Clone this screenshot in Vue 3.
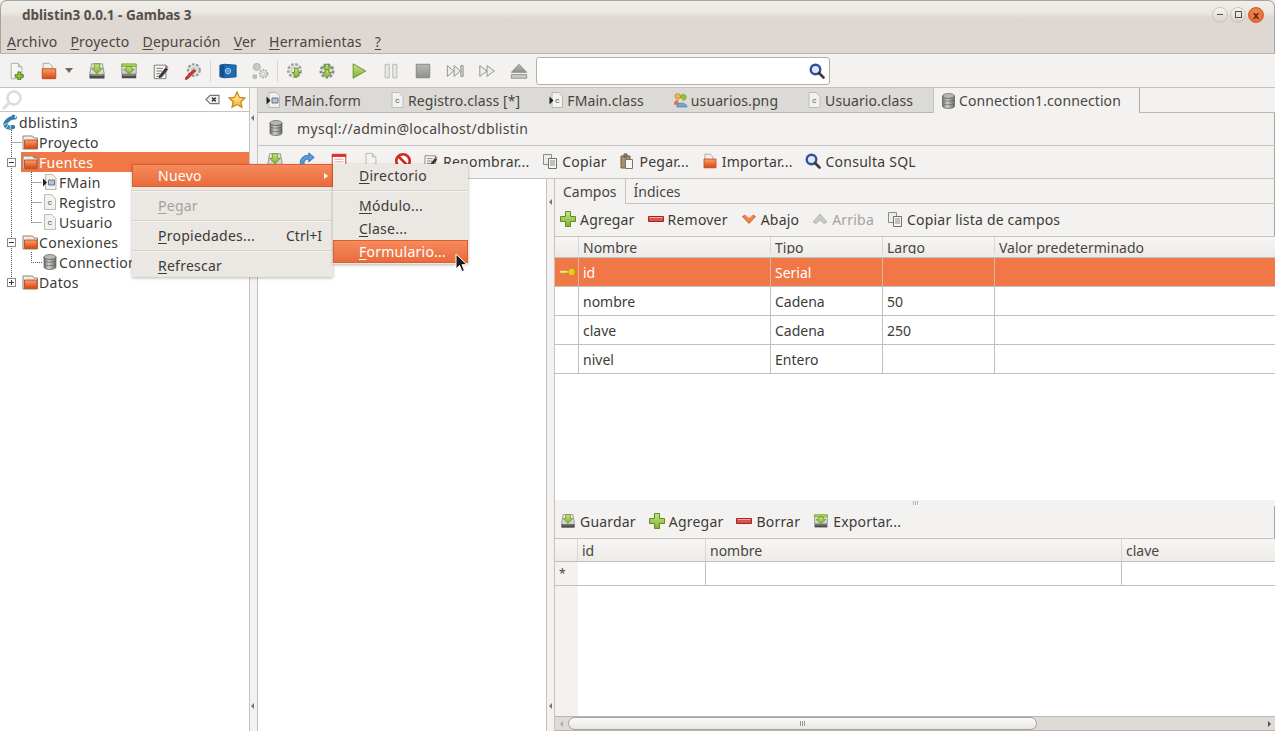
<script setup>
const mainTools = [
  { i: 'newdoc' }, { i: 'folder', cls: 'wide' }, { i: 'save' }, { i: 'export' }, { i: 'edit' }, { i: 'tools' },
  { sep: true }, { i: 'book' }, { i: 'gears' }, { sep: true },
  { i: 'gearsave' }, { i: 'gearsave2' }, { i: 'play' }, { i: 'pause' }, { i: 'stop' }, { i: 'next' }, { i: 'ffwd' }, { i: 'eject' }
]
const tabs = [
  { i: 'form', t: 'FMain.form' }, { i: 'cls', t: 'Registro.class [*]' }, { i: 'formcls', t: 'FMain.class' },
  { i: 'users', t: 'usuarios.png' }, { i: 'cls', t: 'Usuario.class' }, { i: 'db', t: 'Connection1.connection', active: true }
]
const connTools = [
  { i: 'save' }, { i: 'refresh' }, { i: 'calendar' }, { i: 'docimport' }, { i: 'nosign' }
]
const connText = [
  { i: 'edit', t: 'Renombrar...' }, { i: 'copy', t: 'Copiar' }, { i: 'paste', t: 'Pegar...' },
  { i: 'folder', t: 'Importar...' }, { i: 'search', t: 'Consulta SQL' }
]
const fieldTools = [
  { i: 'plus', t: 'Agregar' }, { i: 'minus', t: 'Remover' }, { i: 'down', t: 'Abajo' },
  { i: 'up', t: 'Arriba', off: true }, { i: 'copy', t: 'Copiar lista de campos' }
]
const dataTools = [
  { i: 'save', t: 'Guardar' }, { i: 'plus', t: 'Agregar' }, { i: 'minus', t: 'Borrar' }, { i: 'export', t: 'Exportar...' }
]
const tree = [
  { l: 0, i: 'gambas', t: 'dblistin3' }, { l: 1, i: 'tfolder', t: 'Proyecto' },
  { l: 1, i: 'tfolder', t: 'Fuentes', sel: true }, { l: 2, i: 'form', t: 'FMain' },
  { l: 2, i: 'cls', t: 'Registro' }, { l: 2, i: 'cls', t: 'Usuario' },
  { l: 1, i: 'tfolder', t: 'Conexiones' }, { l: 2, i: 'db', t: 'Connection1' }, { l: 1, i: 'tfolder', t: 'Datos' }
]
const fields = [
  { n: 'id', t: 'Serial', l: '', key: true }, { n: 'nombre', t: 'Cadena', l: '50' },
  { n: 'clave', t: 'Cadena', l: '250' }, { n: 'nivel', t: 'Entero', l: '' }
]
</script>

<template>
  <div class="win">
    <svg class="sprite" width="0" height="0" aria-hidden="true">
      <defs>
        <linearGradient id="gO" x1="0" y1="0" x2="0" y2="1"><stop offset="0" stop-color="#f8a070"/><stop offset="1" stop-color="#d8450f"/></linearGradient>
        <linearGradient id="gG" x1="0" y1="0" x2="0" y2="1"><stop offset="0" stop-color="#c9e28c"/><stop offset="1" stop-color="#7fb02e"/></linearGradient>
        <linearGradient id="gD" x1="0" y1="0" x2="0" y2="1"><stop offset="0" stop-color="#f2f2f0"/><stop offset="1" stop-color="#c4c4c0"/></linearGradient>
        <linearGradient id="gC" x1="0" y1="0" x2="1" y2="0"><stop offset="0" stop-color="#6f6f6b"/><stop offset=".4" stop-color="#cfcfca"/><stop offset="1" stop-color="#6a6a66"/></linearGradient>
        <linearGradient id="gS2" x1="0" y1="0" x2="0" y2="1"><stop offset="0" stop-color="#b8b8b5"/><stop offset="1" stop-color="#8f8f8c"/></linearGradient>
        <radialGradient id="gS" cx=".5" cy=".4" r=".6"><stop offset="0" stop-color="#ffe486"/><stop offset="1" stop-color="#f2a527"/></radialGradient>
      </defs>
      <symbol id="newdoc" viewBox="0 0 20 20"><path d="M3.500 1.500h8l4 4v13h-12z" fill="#f6f6f4" stroke="#a9a9a5"/><path d="M11.500 1.500v4h4" fill="#dcdcd8" stroke="#a9a9a5"/><path d="M11 11h3v3h3v3h-3v3h-3v-3H8v-3h3z" fill="#8fc43a" stroke="#4f7d14"/></symbol>
      <symbol id="folder" viewBox="0 0 20 20"><path d="M3.500 1.500h7l3 3v5h-10z" fill="#f3f1ee" stroke="#a59f98"/><path d="M2.500 7.500h15v11h-15z" fill="url(#gO)" stroke="#b9491c"/></symbol>
      <symbol id="tfolder" viewBox="0 0 16 16"><path d="M1 2h9.500l1.500 2h3.500v11H1z" fill="#f0ede8" stroke="#8c857c"/><path d="M2.500 6h12.500v8.500H2.500z" fill="url(#gO)" stroke="#c2551f"/></symbol>
      <symbol id="save" viewBox="0 0 20 20"><path d="M4 2h12l2 11v5H2v-5z" fill="url(#gD)" stroke="#8e8e8a"/><path d="M2 14h16v4H2z" fill="#4b4b48"/><path d="M3 15h14" stroke="#8c8c88"/><path d="M7 2h6v5h3l-6 6-6-6h3z" fill="url(#gG)" stroke="#6a9a20"/></symbol>
      <symbol id="export" viewBox="0 0 20 20"><path d="M2 3h16v10.500H2z" fill="url(#gD)" stroke="#8e8e8a"/><path d="M2 2h16v3H2z" fill="#a8d254" stroke="#6a9a20" stroke-width=".7"/><path d="M2 14h16v4H2z" fill="#4b4b48"/><path d="M3 15h14" stroke="#8c8c88"/><path d="M7 5h6v3h3l-6 5-6-5h3z" fill="url(#gG)" stroke="#6a9a20"/></symbol>
      <symbol id="edit" viewBox="0 0 20 20"><path d="M2.500 3.500h13v15h-13z" fill="#f7f7f5" stroke="#77736e"/><path d="M5 7h7M5 10h6M5 13h4M5 16h5" stroke="#6b6b68"/><path d="M8 15l7-9 3 2-7 9-3.500 1z" fill="#3c3c3a"/><path d="M15.500 3.500l3 2-1 1.500-3-2z" fill="#c85fa3"/></symbol>
      <symbol id="tools" viewBox="0 0 20 20"><circle cx="11" cy="9" r="6.500" fill="#e4e4e1" stroke="#9b9b97" stroke-width="2.400" stroke-dasharray="3 1.600"/><circle cx="11" cy="9" r="2.500" fill="#f4f4f2" stroke="#9b9b97"/><path d="M2 17l9-9 2 2-9 9-2.500.5z" fill="#d6332b" stroke="#9a1c14" stroke-width=".7"/></symbol>
      <symbol id="book" viewBox="0 0 20 20"><path d="M1 3.500l5-1 13 1v13l-13 1-5-1z" fill="#1c6fb4" stroke="#0d4b82"/><path d="M1 4l5-1v14l-5-1z" fill="#0f538f"/><circle cx="10" cy="10" r="3" fill="none" stroke="#bcd7ee"/><path d="M10 7.500v5M7.800 10h4.400" stroke="#bcd7ee" stroke-width=".7"/></symbol>
      <symbol id="gears" viewBox="0 0 20 20"><circle cx="6.500" cy="5.500" r="4" fill="#c9c9c6" stroke="#b2b2af"/><circle cx="14" cy="13" r="4.200" fill="#efefed" stroke="#a9a9a6" stroke-width="2" stroke-dasharray="2 1"/><circle cx="14" cy="13" r="1.800" fill="#fff" stroke="#b0b0ad"/><path d="M2.500 14.500h3.500v3.500H2.500z" fill="#c6c6c3" stroke="#a8a8a5"/></symbol>
      <symbol id="gearsave" viewBox="0 0 20 20"><circle cx="9.500" cy="9.500" r="7" fill="#e8e8e5" stroke="#a3a3a0" stroke-width="2.800" stroke-dasharray="3 1.700"/><circle cx="9.500" cy="9.500" r="3.500" fill="#f2f2f0" stroke="#aaa"/><path d="M9.500 7h4v4.500h2.500l-4.500 6-4.500-6h2.500z" fill="url(#gG)" stroke="#5f9018"/></symbol>
      <symbol id="gearsave2" viewBox="0 0 20 20"><circle cx="10" cy="10" r="7" fill="#dcdcd9" stroke="#8f8f8c" stroke-width="2.800" stroke-dasharray="3 1.700"/><path d="M8 2.500h4v3h3l-5 5-5-5h3z" fill="url(#gG)" stroke="#5f9018"/><path d="M8 8.500h4v3h3l-5 6-5-6h3z" fill="url(#gG)" stroke="#5f9018"/></symbol>
      <symbol id="play" viewBox="0 0 20 20"><path d="M3.500 2v16l14-8z" fill="url(#gG)" stroke="#62921b"/></symbol>
      <symbol id="pause" viewBox="0 0 20 20"><path d="M3.500 2.500h4.500v15H3.500zM12 2.500h4.500v15H12z" fill="#e7e7e4" stroke="#b2b2af"/></symbol>
      <symbol id="stop" viewBox="0 0 20 20"><path d="M2.500 2.500h15v15h-15z" fill="url(#gS2)" stroke="#858582"/></symbol>
      <symbol id="next" viewBox="0 0 20 20"><path d="M1.500 4v12l7-6zM9 4v12l7-6z" fill="#ececea" stroke="#8c8c89"/><path d="M16.500 4h2.500v12h-2.500z" fill="#d6d6d3" stroke="#8c8c89"/></symbol>
      <symbol id="ffwd" viewBox="0 0 20 20"><path d="M2 4v12l8-6zM10 4v12l8-6z" fill="#ececea" stroke="#8c8c89"/></symbol>
      <symbol id="eject" viewBox="0 0 20 20"><path d="M10 2.500l8.500 9H1.500z" fill="url(#gS2)" stroke="#8b8b88"/><path d="M1.500 14h17v4h-17z" fill="#c9c9c6" stroke="#8b8b88"/></symbol>
      <symbol id="search" viewBox="0 0 16 16"><circle cx="6.500" cy="6.500" r="4.800" fill="#dfe9f5" stroke="#2f4f9f" stroke-width="2.400"/><path d="M10 10l4.500 4.500" stroke="#3b3b3b" stroke-width="2.600" stroke-linecap="round"/></symbol>
      <symbol id="ghost" viewBox="0 0 20 20"><circle cx="12" cy="8" r="6.500" fill="#fff" stroke="#dcdcda" stroke-width="2.500"/><path d="M7 13l-5 5" stroke="#dcdcda" stroke-width="3" stroke-linecap="round"/></symbol>
      <symbol id="clear" viewBox="0 0 16 14"><path d="M1 7l4.500-4.500h9.500v9H5.500z" fill="#f2f2f0" stroke="#77776f" stroke-width="1.200"/><path d="M7.500 5l4 4M11.500 5l-4 4" stroke="#3f3f3d" stroke-width="1.600"/></symbol>
      <symbol id="star" viewBox="0 0 16 16"><path d="M8 .8l2.200 4.700 5 .6-3.700 3.500 1 5-4.500-2.500-4.500 2.500 1-5L.8 6.100l5-.6z" fill="url(#gS)" stroke="#c98414"/></symbol>
      <symbol id="gambas" viewBox="0 0 16 16"><path d="M13 3.500C9 3.500 5 6 3.500 9.500 3 12.500 6 14.500 11 13" fill="none" stroke="#2f7fa8" stroke-width="4.200" stroke-linecap="round"/><path d="M2 11l3.500-2M4 14l2.500-3.500M8 15l.5-3.500" stroke="#cfe4ee" stroke-width="1"/><circle cx="13.500" cy="3" r=".9" fill="#fff"/><path d="M10 1l3 1" stroke="#1f5f84"/></symbol>
      <symbol id="form" viewBox="0 0 14 16"><path d="M2.500 .5h7l3.500 3.500v11.500h-10.500z" fill="#f1f1ef" stroke="#b7b7b3"/><path d="M5.500 6h6v5h-6z" fill="#b5c3d4" stroke="#687788"/><path d="M0 4.500l4 4-4 4z" fill="#222"/></symbol>
      <symbol id="cls" viewBox="0 0 14 16"><path d="M1.500 .5h7l4 4v11h-11z" fill="#f1f1ef" stroke="#bcbcb8"/><text x="4.500" y="11" font-size="8" font-family="Liberation Mono" fill="#555">c</text></symbol>
      <symbol id="formcls" viewBox="0 0 14 16"><path d="M2.500 .5h7l3.500 3.500v11.500h-10.500z" fill="#f1f1ef" stroke="#b7b7b3"/><path d="M0 4.500l4 4-4 4z" fill="#222"/><text x="5.500" y="11" font-size="8" font-family="Liberation Mono" fill="#555">c</text></symbol>
      <symbol id="users" viewBox="0 0 16 16"><circle cx="5" cy="4" r="3" fill="#f0b24a" stroke="#b87d1e" stroke-width=".6"/><circle cx="11" cy="5" r="3" fill="#8fc43a" stroke="#5c8a18" stroke-width=".6"/><path d="M1 13c0-4 2-5 4-5s4 1 4 5z" fill="#df6d55"/><circle cx="8" cy="9" r="2.800" fill="#f5d7b8" stroke="#bd9161" stroke-width=".6"/><path d="M4 15.500c0-3 2-4 4-4s7 0 7 4z" fill="#6ea7dc" stroke="#3e76ad" stroke-width=".6"/></symbol>
      <symbol id="db" viewBox="0 0 14 16"><ellipse cx="7" cy="3" rx="6" ry="2.500" fill="#b8b8b3" stroke="#5f5f5b" stroke-width=".7"/><path d="M1 3v10c0 1.500 2.500 2.500 6 2.500s6-1 6-2.500V3c0 1.500-2.500 2.500-6 2.500S1 4.500 1 3z" fill="url(#gC)" stroke="#5f5f5b" stroke-width=".7"/><path d="M1 7c1 1.500 11 1.500 12 0M1 10.500c1 1.500 11 1.500 12 0" stroke="#5a5a56" stroke-width=".6" fill="none"/></symbol>
      <symbol id="refresh" viewBox="0 0 20 20"><path d="M3 15c-2-7 3-12 9-11V1l6 5-6 5V8C8 7.500 6 10 7 15z" fill="#5a9bdc" stroke="#2f6cab"/></symbol>
      <symbol id="calendar" viewBox="0 0 20 20"><path d="M2.500 3.500h15v14h-15z" fill="#fff" stroke="#c92a1f"/><path d="M2 2h16v3.500H2z" fill="#d9352a"/><path d="M5 8h10M5 11h10M5 14h10" stroke="#e99690"/></symbol>
      <symbol id="docimport" viewBox="0 0 20 20"><path d="M4.500 1.500h7l4 4v13h-11z" fill="#f4f4f2" stroke="#b3b3af"/><path d="M11.500 1.500v4h4" fill="#ddd" stroke="#b3b3af"/><path d="M14 13v5" stroke="#8fc43a" stroke-width="2"/></symbol>
      <symbol id="nosign" viewBox="0 0 20 20"><circle cx="10" cy="10" r="7.500" fill="#fff" stroke="#cf2b20" stroke-width="3"/><path d="M5 5l10 10" stroke="#cf2b20" stroke-width="3"/></symbol>
      <symbol id="copy" viewBox="0 0 16 16"><path d="M1.500 1.500h8v10h-8z" fill="#ececea" stroke="#8b8b88"/><path d="M6.500 5.500h8v10h-8z" fill="#f6f6f4" stroke="#6f6f6c"/><path d="M8 8h5M8 10h5M8 12h5" stroke="#8b8b88"/></symbol>
      <symbol id="paste" viewBox="0 0 16 16"><path d="M2 3h9v12H2z" fill="#a88f6b" stroke="#6f5c40"/><path d="M5 1h3v3H5z" fill="#8c8c88" stroke="#555"/><path d="M6.500 6.500h7v9h-7z" fill="#f6f6f4" stroke="#77736e"/></symbol>
      <symbol id="plus" viewBox="0 0 16 16"><path d="M5.500 .5h5v5h5v5h-5v5h-5v-5h-5v-5h5z" fill="url(#gG)" stroke="#5f8d18"/></symbol>
      <symbol id="minus" viewBox="0 0 16 16"><path d="M.5 5.500h15v5H.5z" fill="#d9534a" stroke="#a1271e"/><path d="M1.500 6.500h13" stroke="#f0a59f"/></symbol>
      <symbol id="down" viewBox="0 0 16 16"><path d="M1.500 5.500l2.500-1.500 4 3.500 4-3.500 2.500 1.500-6.500 7z" fill="#ee8345" stroke="#c2531c" stroke-width=".8"/><path d="M4 4l4 3.500L12 4" fill="none" stroke="#f8c29e" stroke-width=".7"/></symbol>
      <symbol id="up" viewBox="0 0 16 16"><path d="M1 11l3 1.500L8 9l4 3.500 3-1.500-7-8z" fill="#c9c9c6" stroke="#a9a9a6" stroke-width=".8"/></symbol>
      <symbol id="key" viewBox="0 0 18 10"><path d="M1 3.800h9v2.400H1z" fill="#f7e78a"/><circle cx="12.500" cy="5" r="3.700" fill="#eccb1c" stroke="#a98e0f" stroke-width=".7"/><path d="M1 6.200h9" stroke="#a98e0f" stroke-width=".7"/></symbol>
    </svg>

    <header class="title">
      <span class="title-text">dblistin3 0.0.1 - Gambas 3</span>
      <div class="win-btns">
        <span class="wb"><i class="dash"></i></span><span class="wb"><i class="sq"></i></span><span class="wb close">x</span>
      </div>
    </header>

    <nav class="menubar">
      <span><u>A</u>rchivo</span><span><u>P</u>royecto</span><span><u>D</u>epuración</span><span><u>V</u>er</span><span><u>H</u>erramientas</span><span><u>?</u></span>
    </nav>

    <div class="maintools">
      <template v-for="(b, k) in mainTools" :key="k">
        <i v-if="b.sep" class="vsep"></i>
        <span v-else class="tbtn" :class="b.cls">
          <svg class="ic18"><use :href="'#' + b.i" /></svg>
          <i v-if="b.cls" class="drop"></i>
        </span>
      </template>
      <div class="searchbox"><svg class="ic16"><use href="#search" /></svg></div>
    </div>

    <div class="body">
      <aside class="left">
        <div class="filter">
          <svg class="ic20 ghost"><use href="#ghost" /></svg>
          <svg class="clear"><use href="#clear" /></svg>
          <svg class="ic18 star"><use href="#star" /></svg>
        </div>
        <div class="tree">
          <svg class="guides" width="60" height="190">
            <g fill="none" stroke="#555" stroke-dasharray="1 1">
              <path d="M11.500 18V170M11.500 30.500H22M31.500 60V110.500M31.500 70.500H42M31.500 90.500H42M31.500 110.500H42M31.500 140V150.500H42"/>
            </g>
            <g fill="#fff" stroke="#8a8a86">
              <rect x="7.500" y="46.500" width="8" height="8"/><rect x="7.500" y="126.500" width="8" height="8"/><rect x="7.500" y="166.500" width="8" height="8"/>
            </g>
            <path d="M9 50.500h5M9 130.500h5M9 170.500h5M11.500 168v5" stroke="#333"/>
          </svg>
          <div v-for="r in tree" :key="r.t" class="node" :class="['lv' + r.l, { sel: r.sel }]">
            <svg class="ic16"><use :href="'#' + r.i" /></svg><span>{{ r.t }}</span>
          </div>
        </div>
      </aside>

      <div class="split"><i class="tri top"></i><i class="tri bot"></i></div>

      <main class="right">
        <div class="tabs">
          <div v-for="t in tabs" :key="t.t + t.i" class="tab" :class="{ active: t.active }">
            <svg class="ic15"><use :href="'#' + t.i" /></svg><span>{{ t.t }}</span>
          </div>
          <div class="tabfill"></div>
        </div>
        <div class="connhead">
          <svg class="ic16"><use href="#db" /></svg><span>mysql://admin@localhost/dblistin</span>
        </div>
        <div class="conntools">
          <span v-for="b in connTools" :key="b.i" class="tbtn small"><svg class="ic18"><use :href="'#' + b.i" /></svg></span>
          <span v-for="b in connText" :key="b.t" class="tt"><svg class="ic16"><use :href="'#' + b.i" /></svg>{{ b.t }}</span>
        </div>
        <div class="work">
          <div class="tables"></div>
          <div class="split2"><i class="tri top"></i><i class="tri bot"></i></div>
          <section class="detail">
            <div class="subtabs">
              <span class="st on">Campos</span><span class="st">Índices</span><i class="stfill"></i>
            </div>
            <div class="tb2">
              <span v-for="b in fieldTools" :key="b.t" class="tt" :class="{ off: b.off }"><svg class="ic16"><use :href="'#' + b.i" /></svg>{{ b.t }}</span>
            </div>
            <div class="grid1">
              <div class="grow head"><span></span><span>Nombre</span><span>Tipo</span><span>Largo</span><span>Valor predeterminado</span></div>
              <div v-for="f in fields" :key="f.n" class="grow" :class="{ cur: f.key }">
                <span class="rh"><svg v-if="f.key" class="key"><use href="#key" /></svg></span>
                <span>{{ f.n }}</span><span>{{ f.t }}</span><span>{{ f.l }}</span><span></span>
              </div>
            </div>
            <div class="hsplit"><i></i></div>
            <div class="tb2 tb3">
              <span v-for="b in dataTools" :key="b.t" class="tt"><svg class="ic16"><use :href="'#' + b.i" /></svg>{{ b.t }}</span>
            </div>
            <div class="grid2">
              <div class="drow head"><span></span><span>id</span><span>nombre</span><span>clave</span></div>
              <div class="drow"><span class="star-h">*</span><span></span><span></span><span></span></div>
              <div class="dfill"><span class="gutter"></span></div>
            </div>
            <div class="hscroll">
              <i class="arr l"></i><div class="thumb"><b></b></div><i class="arr r"></i>
            </div>
          </section>
        </div>
      </main>
    </div>

    <div class="menu m1">
      <div class="mi hot"><span class="lbl">Nuevo</span><i class="marrow"></i></div>
      <hr />
      <div class="mi dis"><span class="lbl"><u>P</u>egar</span></div>
      <hr />
      <div class="mi"><span class="lbl"><u>P</u>ropiedades...</span><em>Ctrl+I</em></div>
      <hr />
      <div class="mi"><span class="lbl"><u>R</u>efrescar</span></div>
    </div>
    <div class="menu m2">
      <div class="mi"><span class="lbl"><u>D</u>irectorio</span></div>
      <hr />
      <div class="mi"><span class="lbl"><u>M</u>ódulo...</span></div>
      <div class="mi tight"><span class="lbl"><u>C</u>lase...</span></div>
      <div class="mi tight hot"><span class="lbl"><u>F</u>ormulario...</span></div>
    </div>
    <svg class="cursor" width="14" height="20" viewBox="0 0 14 20"><path d="M1 1v15l3.500-3.500 2.500 6 2.500-1-2.500-5.800h5z" fill="#1c1c1c" stroke="#fff"/></svg>
  </div>
</template>

<style>
html, body { margin: 0; padding: 0; background: #f2f1f0; overflow: hidden; }
</style>

<style scoped>
.win {
  position: relative; width: 1275px; height: 731px; overflow: hidden; box-sizing: border-box;
  display: flex; flex-direction: column; background: #f4f2f0; color: #3c3b37;
  font-family: "Noto Sans", sans-serif; font-size: 14px; border-radius: 7px 7px 0 0;
  box-shadow: inset 0 0 0 1px #a9a39b;
}
.sprite { position: absolute; }
svg { display: block; flex: none; overflow: visible; }
u { text-underline-offset: 2px; text-decoration-thickness: 1px; }
.ic20 { width: 20px; height: 20px; }
.ic18 { width: 18px; height: 18px; }
.ic16 { width: 16px; height: 16px; }
.ic15 { width: 15px; height: 16px; }

.title {
  height: 28px; flex: none; box-sizing: border-box; display: flex; align-items: center; padding: 1px 11px 0 22px;
  background: linear-gradient(#f1efeb 0, #ebe8e3 12px, #dfd8d2 18px, #dfd8d2 100%);
  border-radius: 7px 7px 0 0; box-shadow: inset 0 1px 0 #a9a39b, inset 1px 0 0 #a9a39b, inset -1px 0 0 #a9a39b;
}
.title-text { font-weight: 700; font-size: 13.500px; color: #55504a; flex: 1; }
.win-btns { display: flex; gap: 2px; }
.wb {
  width: 16px; height: 16px; border-radius: 50%; background: linear-gradient(#f7f6f4, #d5d0ca);
  border: 1px solid #c9c3bc; box-sizing: border-box; display: flex; align-items: center; justify-content: center;
  font-size: 11px; line-height: 1; color: #55504a;
}
.wb .dash { width: 6px; height: 1px; background: #55504a; }
.wb .sq { width: 7px; height: 7px; border: 1px solid #55504a; box-sizing: border-box; }
.wb.close { background: radial-gradient(circle at 50% 35%, #f48a5c, #e25f23); border-color: #d65a22; color: #5b2a14; font-weight: 700; }

.menubar {
  height: 26px; flex: none; box-sizing: border-box; display: flex; align-items: center; gap: 13px; padding: 2px 7px 0;
  background: #dfd8d2; border-bottom: 1px solid #b9b3ab; box-shadow: inset 1px 0 0 #a9a39b, inset -1px 0 0 #a9a39b;
  color: #4a453f; letter-spacing: .2px;
}

.maintools {
  height: 34px; flex: none; box-sizing: border-box; display: flex; align-items: center; padding-left: 1px;
  border-bottom: 1px solid #c6c3bf; background: #f4f2f0;
}
.tbtn { width: 32px; height: 32px; display: flex; align-items: center; justify-content: center; flex: none; position: relative; }
.tbtn.wide { width: 48px; justify-content: flex-start; padding-left: 7px; box-sizing: border-box; gap: 7px; }
.drop { width: 0; height: 0; border: 4px solid transparent; border-top: 5px solid #6b6b68; border-bottom: 0; }
.vsep { width: 1px; height: 22px; background: #d9d6d2; margin: 0 1px 0 1px; flex: none; }
.searchbox {
  margin-left: 1px; width: 294px; height: 28px; box-sizing: border-box; background: #fff; border: 1px solid #b8afa4;
  border-radius: 3px; display: flex; align-items: center; justify-content: flex-end; padding-right: 4px;
}

.body { flex: 1; min-height: 0; display: flex; }
.left { width: 249px; flex: none; display: flex; flex-direction: column; background: #fff; }
.filter {
  height: 24px; flex: none; box-sizing: border-box; display: flex; align-items: center; padding: 0 3px 0 2px;
  border-bottom: 1px solid #c6c3bf;
}
.ghost { margin-right: auto; }
.clear { width: 15px; height: 13px; margin-right: 8px; }
.tree { flex: 1; position: relative; letter-spacing: .3px; }
.guides { position: absolute; left: 0; top: 0; pointer-events: none; }
.node { height: 20px; display: flex; align-items: center; gap: 1px; color: #3c3b37; position: relative; }
.node.lv0 { padding-left: 2px; }
.node.lv1 { padding-left: 22px; }
.node.lv2 { padding-left: 42px; }
.node.sel { background: linear-gradient(90deg, transparent 21px, #f07746 21px); color: #fff; }
.split { width: 8px; flex: none; background: #f4f2f0; border-right: 1px solid #c6c3bf; position: relative; box-shadow: inset 1px 0 0 #c6c3bf; }
.tri { position: absolute; width: 0; height: 0; border: 3px solid transparent; border-right: 3px solid #77736e; border-left: 0; left: 2px; }
.tri.top { top: 27px; }
.tri.bot { bottom: 22px; }

.right { flex: 1; min-width: 0; display: flex; flex-direction: column; }
.tabs { height: 25px; flex: none; display: flex; background: #dcdad6; box-sizing: border-box; letter-spacing: .1px; }
.tab { display: flex; align-items: center; gap: 3px; padding: 0 21px 0 8px; border-bottom: 1px solid #bcb9b5; color: #4a453f; }
.tab.active { background: #f4f2f0; border-bottom: 0; border-left: 1px solid #c6c3bf; border-right: 1px solid #b0ada9; padding: 0 18px 0 7px; margin-left: -1px; }
.tabfill { flex: 1; background: #f4f2f0; border-bottom: 1px solid #bcb9b5; }
.connhead {
  height: 33px; flex: none; box-sizing: border-box; display: flex; align-items: center; gap: 13px; padding: 0 0 2px 10px;
  border-bottom: 1px solid #c6c3bf; color: #4a453f; letter-spacing: .33px;
}
.conntools { height: 33px; flex: none; box-sizing: border-box; display: flex; align-items: center; border-bottom: 1px solid #c6c3bf; padding: 0 0 2px 1px; letter-spacing: .25px; }
.tbtn.small { width: 32px; }
.tt { display: flex; align-items: center; gap: 4px; padding: 0 4px; margin-right: 4.600px; white-space: nowrap; }
.tt.off { color: #a5a29e; }
.conntools .tt:first-of-type { margin-left: 3px; }

.work { flex: 1; min-height: 0; display: flex; }
.tables { width: 288px; flex: none; background: #fff; }
.split2 { width: 9px; flex: none; position: relative; background: #f4f2f0; border-left: 1px solid #c6c3bf; border-right: 1px solid #c6c3bf; box-sizing: border-box; }
.split2 .tri.top { top: 20px; }
.detail { flex: 1; min-width: 0; display: flex; flex-direction: column; }
.subtabs { height: 25px; flex: none; display: flex; align-items: stretch; }
.st { padding: 0 8px; display: flex; align-items: center; color: #4a453f; border-bottom: 1px solid #c6c3bf; }
.st.on { border-bottom: 0; border-right: 1px solid #c6c3bf; }
.stfill { flex: 1; border-bottom: 1px solid #c6c3bf; }
.tb2 { height: 33px; flex: none; display: flex; align-items: center; padding: 0 0 2px 1px; border-bottom: 1px solid #c6c3bf; box-sizing: border-box; letter-spacing: .2px; }
.tb2 .tt { padding: 0 4px; margin-right: 5px; }

.grid1 { height: 263px; flex: none; background: #fff; }
.grow { display: grid; grid-template-columns: 24px 192px 112px 112px 1fr; height: 29px; box-sizing: border-box; border-bottom: 1px solid #c2c0bc; align-items: stretch; }
.grow span { display: flex; align-items: center; padding-left: 4px; border-right: 1px solid #c2c0bc; white-space: nowrap; overflow: hidden; color: #3c3b37; }
.grow span:last-child { border-right: 0; }
.grow.head { height: 21px; background: linear-gradient(#f7f6f5, #edebe8); position: relative; }
.grow.head span { align-items: flex-start; line-height: 21px; height: 20px; color: #4a453f; border-right-color: #dad8d4; }
.grow.head::after { content: ""; position: absolute; left: 0; right: 0; bottom: 0; height: 3px; background: #edebe8; }
.grow.cur { background: #f07746; }
.grow.cur span { color: #fff; border-right-color: #d9b5a2; }
.rh { padding-left: 4px !important; }
.key { width: 18px; height: 10px; }

.hsplit { height: 6px; flex: none; background: #f4f2f0; display: flex; justify-content: center; align-items: center; }
.hsplit i { width: 5px; height: 4px; background: repeating-linear-gradient(90deg, #b9b6b2 0 1px, transparent 1px 2px); }

.grid2 { flex: 1; min-height: 0; display: flex; flex-direction: column; background: #fff; }
.drow { display: grid; grid-template-columns: 23px 128px 416px 1fr; flex: none; box-sizing: border-box; height: 24px; border-bottom: 1px solid #c2c0bc; }
.drow span { display: flex; align-items: center; padding-left: 4px; border-right: 1px solid #c2c0bc; color: #4a453f; }
.drow span:last-child { border-right: 0; }
.drow.head { height: 23px; background: linear-gradient(#f7f6f5, #edebe8); }
.drow.head span { border-right-color: #dad8d4; }
.star-h { background: #f4f2f0; border-right: 0 !important; font-size: 12px; }
.dfill { flex: 1; display: flex; }
.gutter { width: 23px; background: #f4f2f0; }
.hscroll { height: 15px; flex: none; box-sizing: border-box; display: flex; align-items: center; background: #dedbd7; border-top: 1px solid #bab7b3; border-bottom: 1px solid #bab7b3; position: relative; }
.thumb { margin-left: 13px; width: 469px; height: 13px; box-sizing: border-box; border: 1px solid #a5a29e; border-radius: 7px; background: linear-gradient(#fbfaf9, #e9e7e4); display: flex; align-items: center; justify-content: center; }
.thumb b { width: 5px; height: 5px; background: repeating-linear-gradient(90deg, #9a9793 0 1px, transparent 1px 2px); }
.arr { width: 0; height: 0; border: 3px solid transparent; }
.arr.l { border-right-color: #b0ada9; border-left: 0; margin-left: 5px; margin-right: -8px; }
.arr.r { border-left-color: #55514c; border-right: 0; margin-left: auto; margin-right: 4px; }

.menu {
  position: absolute; background: #ebe7e2; box-sizing: border-box; color: #3c3b37;
  box-shadow: 0 1px 3px rgba(60, 50, 40, .35); padding: 0; letter-spacing: .25px;
}
.m1 { left: 132px; top: 164px; width: 201px; height: 113px; }
.m2 { left: 333px; top: 164px; width: 135px; height: 100px; }
.mi { height: 23px; display: flex; align-items: center; padding-left: 26px; position: relative; }
.mi.hot { background: linear-gradient(#f68c5e, #e96a3a); color: #fff; box-shadow: inset 0 0 0 1px #d9602f; }
.mi.dis { color: #a5a29e; }
.mi em { position: absolute; left: 154px; font-style: normal; letter-spacing: 0; }
.marrow { position: absolute; right: 5px; width: 0; height: 0; border: 3px solid transparent; border-left: 4px solid #fff; border-right: 0; }
.menu hr { margin: 3px 0; height: 1px; border: 0; background: #d6d2cc; box-shadow: 0 1px 0 #f6f3f0; }
.cursor { position: absolute; left: 455px; top: 253px; }
</style>
